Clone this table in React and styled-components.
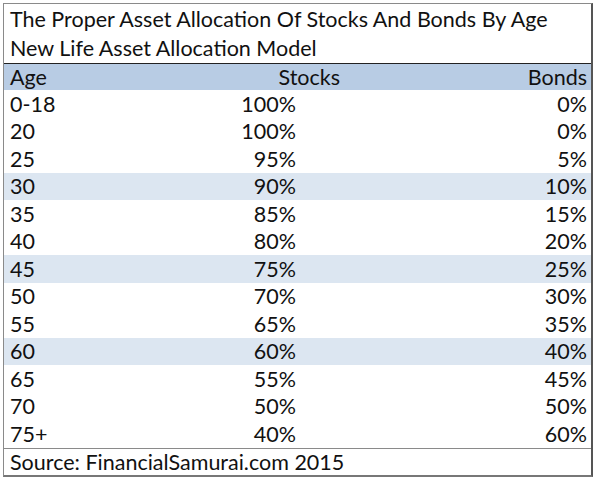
import { createGlobalStyle, styled } from "styled-components";

const GlobalStyle = createGlobalStyle`
  html, body {
    margin: 0;
    padding: 0;
    background: #ffffff;
  }
  body {
    font-family: Lato, "Open Sans", sans-serif;
    color: #111111;
  }
`;

const Page = styled.div`
  padding: 3px 0 0 3px;
  width: 600px;
  height: 481px;
  box-sizing: border-box;
`;

const Sheet = styled.div`
  width: 590px;
  box-sizing: border-box;
  border: 1px solid #8a8a8a;
  border-right: 2px solid #555555;
  border-bottom: 2px solid #777777;
`;

const TitleLine = styled.div`
  height: 29.5px;
  display: flex;
  align-items: center;
  padding: 0 6px;
  font-size: 21.5px;
  white-space: nowrap;
`;

// header labels sit further right than the values below them
const Row = styled.div`
  display: grid;
  grid-template-columns: ${(p) => (p.$head ? "200px 130px 1fr" : "200px 86px 1fr")};
  height: ${(p) => (p.$head ? "27px" : "27.5px")};
  align-items: center;
  padding: 0 4px 0 6px;
  font-size: 21.5px;
  background: ${(p) => (p.$head ? "#b8cce4" : p.$shade ? "#dce6f1" : "#ffffff")};
  border-top: ${(p) => (p.$head ? "1px solid #222222" : "none")};
  box-sizing: border-box;
`;

const Cell = styled.span`
  text-align: ${(p) => (p.$right ? "right" : "left")};
  white-space: nowrap;
`;

const Footer = styled.div`
  height: 26px;
  display: flex;
  align-items: center;
  padding: 0 6px;
  font-size: 21.5px;
  border-top: 1px solid #8a8a8a;
`;

const rows = [
  ["0-18", "100%", "0%"],
  ["20", "100%", "0%"],
  ["25", "95%", "5%"],
  ["30", "90%", "10%"],
  ["35", "85%", "15%"],
  ["40", "80%", "20%"],
  ["45", "75%", "25%"],
  ["50", "70%", "30%"],
  ["55", "65%", "35%"],
  ["60", "60%", "40%"],
  ["65", "55%", "45%"],
  ["70", "50%", "50%"],
  ["75+", "40%", "60%"],
];

const shaded = ["30", "45", "60"];

export default function App() {
  return (
    <Page>
      <GlobalStyle />
      <Sheet>
        <TitleLine>The Proper Asset Allocation Of Stocks And Bonds By Age</TitleLine>
        <TitleLine>New Life Asset Allocation Model</TitleLine>
        <Row $head>
          <Cell>Age</Cell>
          <Cell $right>Stocks</Cell>
          <Cell $right>Bonds</Cell>
        </Row>
        {rows.map(([age, stocks, bonds]) => (
          <Row key={age} $shade={shaded.includes(age)}>
            <Cell>{age}</Cell>
            <Cell $right>{stocks}</Cell>
            <Cell $right>{bonds}</Cell>
          </Row>
        ))}
        <Footer>Source: FinancialSamurai.com 2015</Footer>
      </Sheet>
    </Page>
  );
}
